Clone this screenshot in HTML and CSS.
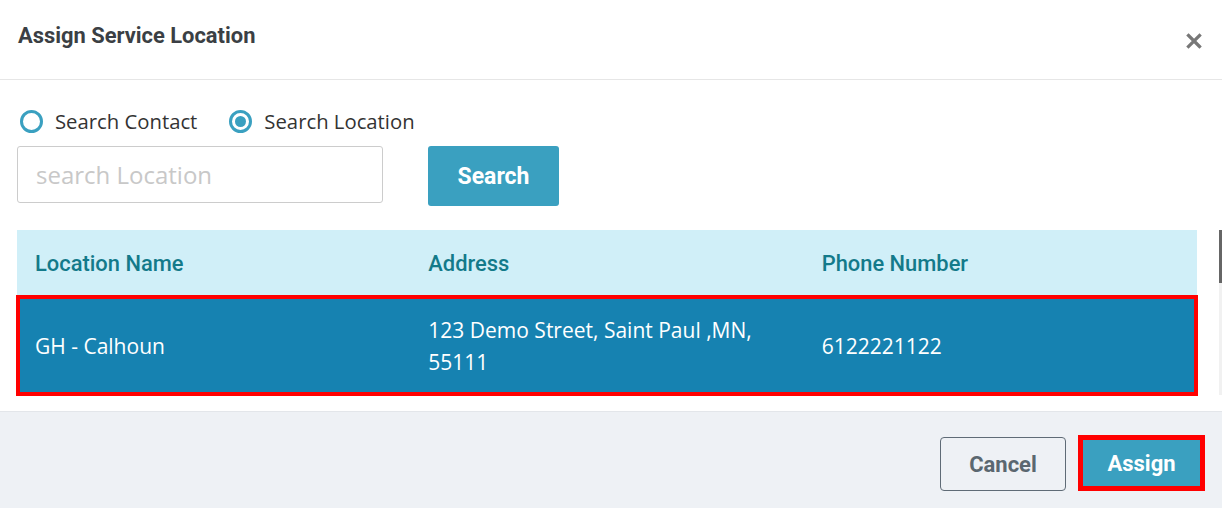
FILE: index.html
```html
<!DOCTYPE html>
<html lang="en">
<head>
    <meta charset="UTF-8">
    <meta name="viewport" content="width=device-width, initial-scale=1.0">
    <title>Assign Service Location</title>
    <link rel="stylesheet" href="styles.css">
</head>
<body>
    <div class="modal">
        <header class="modal-header">
            <h1>Assign Service Location</h1>
            <button class="close-button" aria-label="Close">
                <svg width="16" height="16" viewBox="0 0 16 16">
                    <path d="M2.5 2.5 L13.5 13.5 M13.5 2.5 L2.5 13.5" stroke="#777777" stroke-width="3.2" stroke-linecap="square"/>
                </svg>
            </button>
        </header>

        <section class="modal-body">
            <div class="radio-row">
                <label class="radio">
                    <span class="radio-circle"></span>
                    Search Contact
                </label>
                <label class="radio">
                    <span class="radio-circle checked"></span>
                    Search Location
                </label>
            </div>

            <div class="search-row">
                <input type="text" class="search-input" placeholder="search Location">
                <button class="search-button">Search</button>
            </div>

            <div class="table-wrap">
                <table class="location-table">
                    <thead>
                        <tr>
                            <th>Location Name</th>
                            <th>Address</th>
                            <th>Phone Number</th>
                        </tr>
                    </thead>
                    <tbody>
                        <tr class="selected">
                            <td>GH - Calhoun</td>
                            <td>123 Demo Street, Saint Paul ,MN, 55111</td>
                            <td>6122221122</td>
                        </tr>
                    </tbody>
                </table>
                <div class="scrollbar">
                    <div class="scrollbar-thumb"></div>
                </div>
            </div>
        </section>

        <footer class="modal-footer">
            <button class="cancel-button">Cancel</button>
            <button class="assign-button">Assign</button>
        </footer>
    </div>
</body>
</html>
```

FILE: styles.css
```css
body {
    font-family: "Open Sans", Arial, sans-serif;
    background-color: #ffffff;
    margin: 0;
    padding: 0;
}

.modal {
    width: 1222px;
    height: 508px;
    display: flex;
    flex-direction: column;
    overflow: hidden;
}

.modal-header {
    height: 79px;
    flex-shrink: 0;
    display: flex;
    align-items: center;
    justify-content: space-between;
    padding: 0 18px;
    border-bottom: 1px solid #e6e6e6;
}

.modal-header h1 {
    font-family: Roboto, Arial, sans-serif;
    font-size: 21.9px;
    font-weight: 700;
    color: #3b3f44;
    margin: 0;
    padding-bottom: 9px;
}

.close-button {
    background: none;
    border: none;
    padding: 0;
    margin-right: 2px;
    margin-top: 2px;
    cursor: pointer;
    display: flex;
}

.modal-body {
    flex: 1;
    padding: 27px 0 0 17px;
}

.radio-row {
    display: flex;
    gap: 32px;
    padding-left: 3px;
}

.radio {
    display: flex;
    align-items: center;
    gap: 12px;
    font-size: 20.3px;
    color: #333333;
}

.radio-circle {
    width: 17px;
    height: 17px;
    border: 3px solid #3aa0c0;
    border-radius: 50%;
    position: relative;
}

.radio-circle.checked::after {
    content: "";
    position: absolute;
    left: 3px;
    top: 3px;
    width: 11px;
    height: 11px;
    border-radius: 50%;
    background-color: #3aa0c0;
}

.search-row {
    display: flex;
    align-items: flex-start;
    gap: 45px;
    margin-top: 11px;
}

.search-input {
    width: 366px;
    height: 57px;
    box-sizing: border-box;
    border: 1px solid #cccccc;
    border-radius: 3px;
    padding: 0 18px;
    font-family: "Open Sans", Arial, sans-serif;
    font-size: 24px;
    color: #333333;
}

.search-input::placeholder {
    color: #c8c8c8;
}

.search-button {
    width: 131px;
    height: 60px;
    background-color: #3aa0c0;
    color: #ffffff;
    border: none;
    border-radius: 3px;
    font-family: Roboto, Arial, sans-serif;
    font-size: 23px;
    font-weight: 700;
    cursor: pointer;
}

.table-wrap {
    display: flex;
    margin-top: 24px;
}

.location-table {
    width: 1180px;
    border-collapse: collapse;
    table-layout: fixed;
}

.location-table th {
    height: 66px;
    background-color: #d0eff8;
    color: #137a8a;
    font-family: Roboto, Arial, sans-serif;
    font-size: 21.9px;
    font-weight: 500;
    text-align: left;
    padding: 0 18px;
}

.location-table td {
    height: 90px;
    color: #ffffff;
    font-size: 21px;
    line-height: 32px;
    padding: 0 20px 0 18px;
}

.location-table tr.selected {
    background-color: #1682b1;
    outline: 4px solid #ff0000;
    outline-offset: -3px;
}

.scrollbar {
    width: 3px;
    height: 165px;
    margin-left: 22px;
    background-color: #f1f1f1;
}

.scrollbar-thumb {
    height: 53px;
    background-color: #666666;
}

.modal-footer {
    height: 97px;
    flex-shrink: 0;
    box-sizing: border-box;
    background-color: #eef1f5;
    border-top: 1px solid #e3e6ea;
    display: flex;
    align-items: flex-start;
    justify-content: flex-end;
    gap: 12px;
    padding: 23px 17px 0 0;
}

.cancel-button {
    width: 126px;
    height: 54px;
    margin-top: 2px;
    background-color: transparent;
    border: 1px solid #5f6b76;
    border-radius: 4px;
    color: #5b6770;
    font-family: Roboto, Arial, sans-serif;
    font-size: 22px;
    font-weight: 700;
    cursor: pointer;
}

.assign-button {
    width: 127px;
    height: 56px;
    background-color: #3aa0c0;
    border: 5px solid #ff0000;
    color: #ffffff;
    font-family: Roboto, Arial, sans-serif;
    font-size: 22px;
    font-weight: 700;
    cursor: pointer;
}
```
